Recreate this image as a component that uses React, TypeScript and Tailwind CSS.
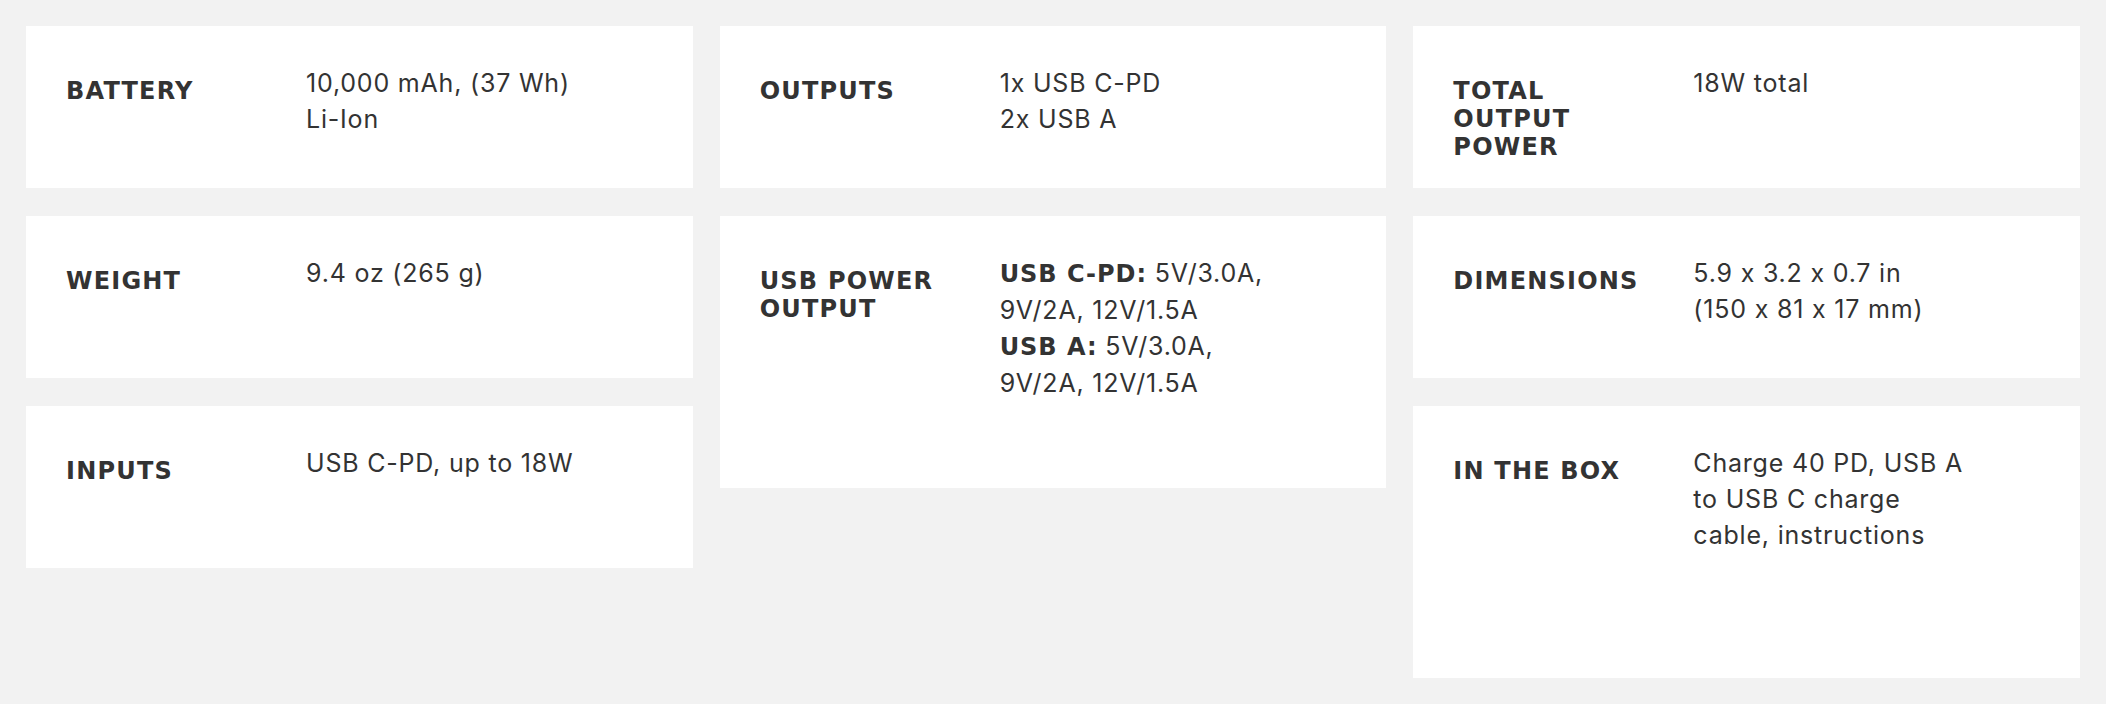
import React from "react";

type Spec = { label: React.ReactNode; value: React.ReactNode; tall?: boolean };

const boldFont = "font-['DejaVu_Sans',sans-serif] font-bold";

function Card({ label, value, tall }: Spec) {
  return (
    <div
      className={
        "bg-white flex pl-[40px] pr-[30px] pt-[39px] " +
        (tall ? "h-[272px]" : "h-[162px]")
      }
    >
      <div
        className={
          "w-[240px] shrink-0 mt-[12px] text-[24px] leading-[28px] uppercase tracking-[0.05em] text-[#333333] " +
          boldFont
        }
      >
        {label}
      </div>
      <div className="text-[25px] leading-[36px] font-normal tracking-[0.032em] text-[#333333] [font-feature-settings:'calt'_0]">
        {value}
      </div>
    </div>
  );
}

const B = ({ children }: { children: React.ReactNode }) => (
  <span className={"text-[24px] tracking-[0.04em] " + boldFont}>{children}</span>
);

const col1: Spec[] = [
  { label: "Battery", value: <>10,000 mAh, (37 Wh)<br />Li-Ion</> },
  { label: "Weight", value: <>9.4 oz (265 g)</> },
  { label: "Inputs", value: <>USB C-PD, up to 18W</> },
];

const col2: Spec[] = [
  { label: "Outputs", value: <>1x USB C-PD<br />2x USB A</> },
  {
    label: <>USB Power<br />Output</>,
    value: (
      <>
        <B>USB C-PD:</B> 5V/3.0A,<br />
        9V/2A, 12V/1.5A<br />
        <B>USB A:</B> 5V/3.0A,<br />
        9V/2A, 12V/1.5A
      </>
    ),
    tall: true,
  },
];

const col3: Spec[] = [
  { label: <>Total<br />Output<br />Power</>, value: <>18W total</> },
  { label: "Dimensions", value: <>5.9 x 3.2 x 0.7 in<br />(150 x 81 x 17 mm)</> },
  {
    label: "In the box",
    value: <>Charge 40 PD, USB A<br />to USB C charge<br />cable, instructions</>,
    tall: true,
  },
];

export default function App() {
  return (
    <div className="min-h-[704px] w-full bg-[#f2f2f2] px-[26px] pt-[26px] pb-[26px] flex gap-[27px] items-start font-['Inter',sans-serif]">
      {[col1, col2, col3].map((col, i) => (
        <div key={i} className="flex-1 flex flex-col gap-[28px]">
          {col.map((c, j) => (
            <Card key={j} {...c} />
          ))}
        </div>
      ))}
    </div>
  );
}
